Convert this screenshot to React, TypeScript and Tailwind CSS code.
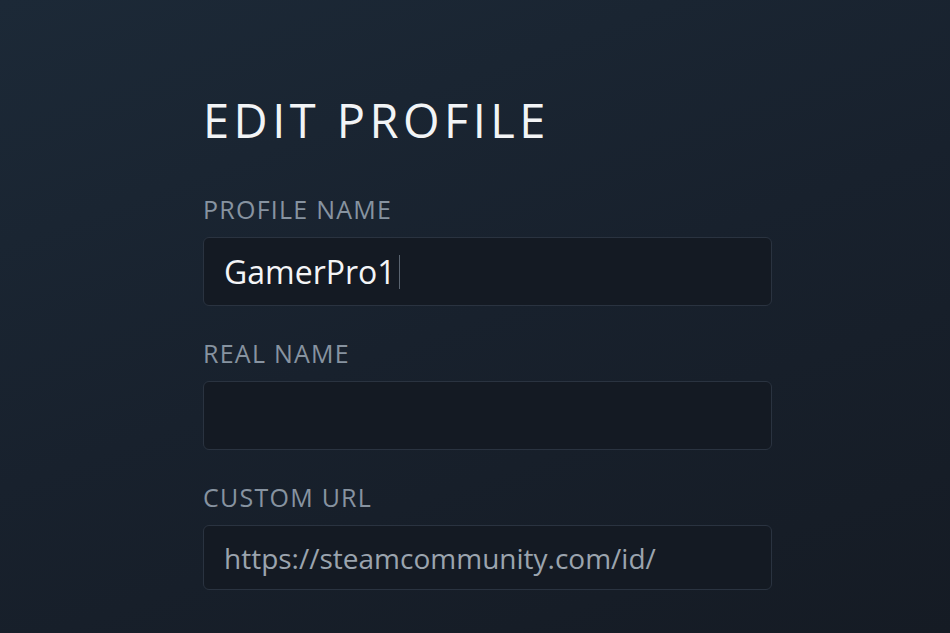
export default function App() {
  const fields = [
    { label: 'PROFILE NAME', value: 'GamerPro1', active: true, h: 'h-[69px]' },
    { label: 'REAL NAME', value: '', h: 'h-[69px]' },
    { label: 'CUSTOM URL', value: 'https://steamcommunity.com/id/', h: 'h-[65px]' },
  ]

  return (
    <div
      className="w-[950px] h-[633px] overflow-hidden bg-[linear-gradient(160deg,#1c2937_0%,#18212d_50%,#151b24_100%)]"
      style={{ fontFamily: '"Open Sans", "Noto Sans", sans-serif' }}
    >
      <div className="ml-[203px] w-[569px] pt-[88px]">
        <h1 className="text-[47px] leading-[64px] tracking-[0.095em] text-[#f2f4f6] font-normal">
          EDIT PROFILE
        </h1>

        <div className="mt-[41px] flex flex-col">
          {fields.map((f, i) => (
            <div key={f.label} className={i > 0 ? 'mt-[31px]' : ''}>
              <div className="text-[25px] leading-[32px] tracking-[0.05em] text-[#8793a0]">{f.label}</div>
              <div className={`mt-[12px] ${f.h} rounded-[6px] border border-[#2a3340] bg-[#141a23] flex items-center pl-[20px]`}>
                {f.active ? (
                  <span className="text-[32px] text-[#f4f5f7] flex items-center">
                    {f.value}
                    <span className="ml-[3px] w-px h-[34px] bg-[#5a6470]" />
                  </span>
                ) : (
                  <span className="text-[28px] text-[#9ba4ae]">{f.value}</span>
                )}
              </div>
            </div>
          ))}
        </div>
      </div>
    </div>
  )
}
